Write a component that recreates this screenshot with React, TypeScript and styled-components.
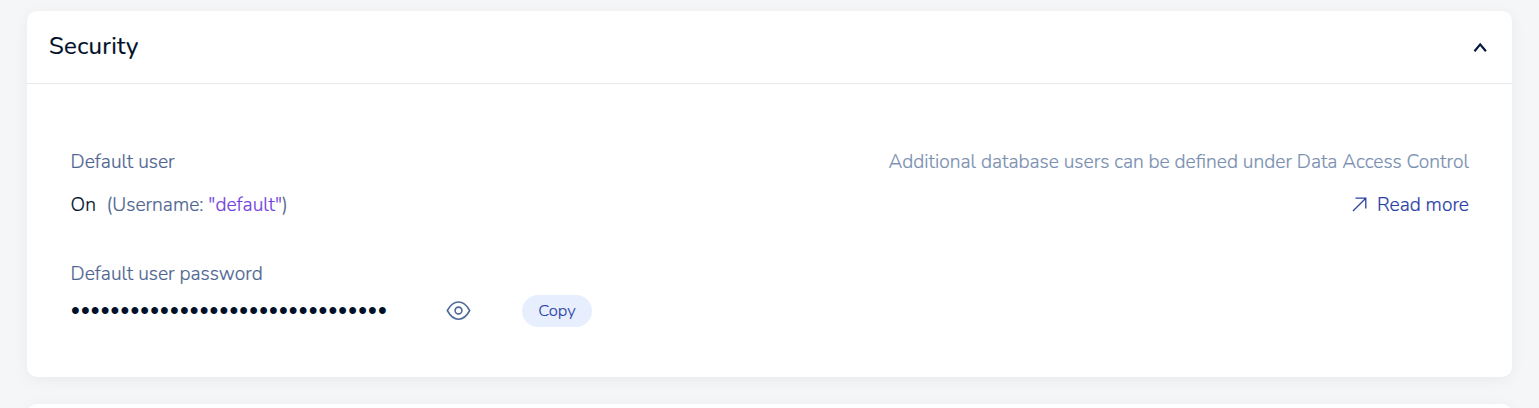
import React from 'react';
import styled, { createGlobalStyle } from 'styled-components';

const GlobalStyle = createGlobalStyle`
  * { box-sizing: border-box; }
  html, body { margin: 0; height: 100%; overflow: hidden; background: #f4f6f8; }
  body { font-family: Nunito, Lato, 'Open Sans', sans-serif; font-weight: 300; color: #001028; }
`;

const Page = styled.main`
  height: 408px;
  overflow: hidden;
  padding: 11px 27px 0;
  display: flex;
  flex-direction: column;
  gap: 27px;
`;

const Card = styled.section<{ $height: number }>`
  flex: none;
  height: ${(p) => p.$height}px;
  background: #fff;
  border-radius: 10px;
  box-shadow: 0 3px 15px rgba(0, 0, 0, 0.05);
`;

const CardHeader = styled.header`
  height: 73px;
  padding: 0 24px 2px 22px;
  display: flex;
  align-items: center;
  justify-content: space-between;
  border-bottom: 1px solid #e8ebec;
`;

const Title = styled.h2`
  margin: 0;
  font-size: 24px;
  line-height: 32px;
  font-weight: 400;
  letter-spacing: 0.3px;
  -webkit-text-stroke: 0.2px currentColor;
  color: #001028;
`;

const ToggleButton = styled.button`
  display: flex;
  padding: 2px 0 0;
  border: 0;
  background: none;
  color: #051a3b;
`;

const CardBody = styled.div`
  padding: 65px 43px 0 43.6px;
  display: flex;
  justify-content: space-between;
`;

const Column = styled.div<{ $align?: string }>`
  display: flex;
  flex-direction: column;
  align-items: ${(p) => p.$align ?? 'flex-start'};
`;

const Text = styled.span<{ $color: string }>`
  font-size: 19.23px;
  line-height: 26px;
  white-space: pre;
  -webkit-text-stroke: 0.2px currentColor;
  color: ${(p) => p.$color};
`;

const Row = styled.div<{ $top: number; $gap?: number }>`
  display: flex;
  align-items: center;
  margin-top: ${(p) => p.$top}px;
  gap: ${(p) => p.$gap ?? 0}px;
`;

const PasswordLabel = styled.div`
  display: flex;
  margin-top: 43px;
`;

const Password = styled.span`
  width: 375.4px;
  padding: 0 0 2px 0.4px;
  font-family: 'Liberation Sans', sans-serif;
  font-size: 25px;
  line-height: 30px;
  letter-spacing: 1.15px;
  white-space: nowrap;
  color: #001028;
`;

const IconButton = styled.button`
  display: flex;
  width: 25px;
  padding: 0 0 1px;
  border: 0;
  background: none;
  color: #4d6a9a;
`;

const CopyButton = styled.button`
  margin-left: 51px;
  width: 70px;
  height: 32px;
  padding: 0 0 1px;
  border: 0;
  border-radius: 16px;
  background: #e7efff;
  color: #2b40a5;
  font: inherit;
  font-size: 16.6px;
  -webkit-text-stroke: 0.15px currentColor;
`;

const ReadMore = styled.a`
  display: flex;
  align-items: center;
  margin-top: 17px;
  gap: 10px;
  color: #2b40a5;

  svg { margin-bottom: 2px; }
`;

export default function App() {
  return (
    <>
      <GlobalStyle />
      <Page>
        <Card $height={366}>
          <CardHeader>
            <Title>Security</Title>
            <ToggleButton aria-label="Collapse">
              <svg width="15" height="11" viewBox="0 0 15 11" fill="none" stroke="currentColor" strokeWidth="2.2">
                <path d="M1.5 9.300 7.200 2.400 12.900 9.300" />
              </svg>
            </ToggleButton>
          </CardHeader>
          <CardBody>
            <Column>
              <Text $color="#4d6490">Default user</Text>
              <Row $top={17} $gap={10.6}>
                <Text $color="#001028">On</Text>
                <Text $color="#4d6490">
                  (Username: <Text $color="#7040e0">"default"</Text>)
                </Text>
              </Row>
              <PasswordLabel>
                <Text $color="#4d6490">Default user password</Text>
              </PasswordLabel>
              <Row $top={8}>
                <Password>{'•'.repeat(32)}</Password>
                <IconButton aria-label="Show password">
                  <svg width="25" height="20" viewBox="0 0 25 20" fill="none" stroke="currentColor" strokeWidth="1.6">
                    <path d="M1.300 9.500C4 4.600 7.700 1 12.500 1S21 4.600 23.700 9.500C21 14.500 17.300 18.200 12.500 18.200S4 14.500 1.300 9.500Z" strokeLinejoin="round" />
                    <circle cx="12.500" cy="9.500" r="3.400" />
                  </svg>
                </IconButton>
                <CopyButton>Copy</CopyButton>
              </Row>
            </Column>
            <Column $align="flex-end">
              <Text $color="#7a90b0">Additional database users can be defined under Data Access Control</Text>
              <ReadMore>
                <svg width="15" height="15" viewBox="0 0 15 15" fill="none" stroke="currentColor" strokeWidth="1.3">
                  <path d="M1 14 13.800 1.200M3.500 1.200H13.800V11.500" />
                </svg>
                <Text $color="#2b40a5">Read more</Text>
              </ReadMore>
            </Column>
          </CardBody>
        </Card>
        <Card $height={80} />
      </Page>
    </>
  );
}
